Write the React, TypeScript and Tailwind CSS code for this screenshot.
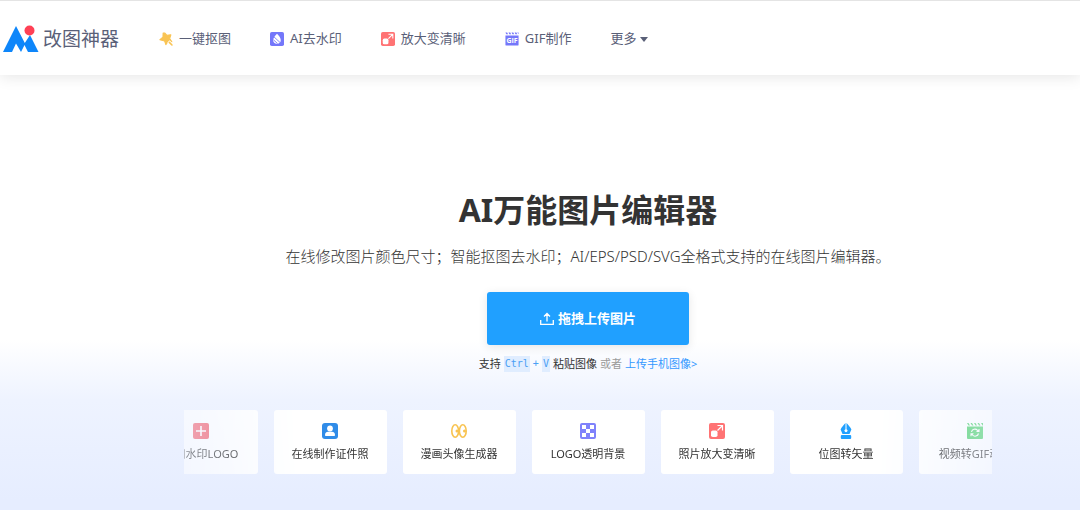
import React from 'react'

const GifIcon = ({ className }: { className: string }) => (
  <svg viewBox="0 0 16 16" className={className} aria-hidden="true">
    <path d="M.5.500h2l1 2h-2zM4 .5h2l1 2H5zM7.500.500h2l1 2h-2zM11 .5h2l1 2h-2zM14 .5h1.500v2zM.5 4h15v10.500a1 1 0 0 1-1 1h-13a1 1 0 0 1-1-1z" fill="#7477fa" />
    <text x="8" y="12.800" textAnchor="middle" fontSize="8" fontWeight="bold" fill="#fff" fontFamily="Open Sans, sans-serif">GIF</text>
  </svg>
)

const StarIcon = ({ className }: { className: string }) => (
  <svg viewBox="0 0 16 16" className={className} aria-hidden="true">
    <path
      d="M6.800 1.300 9 3.800l4.600-.6-1.400 4.300 2.500 3.600-4.500-.1-2.400 3.500-1.400-4.200L1 8.800l3.500-2.900.2-4.800z"
      fill="#f9c454"
      stroke="#f9c454"
      strokeWidth="1.200"
      strokeLinejoin="round"
    />
    <path d="m10.800 10.800 4.500 4.500" stroke="#fff" strokeWidth="3.600" />
    <path d="m11.800 11.800 3 3" stroke="#f9c454" strokeWidth="1.800" strokeLinecap="round" />
  </svg>
)

const DropIcon = ({ className }: { className: string }) => (
  <svg viewBox="0 0 16 16" className={className} aria-hidden="true">
    <rect width="16" height="16" rx="2" fill="#7477fa" />
    <path d="M8 2c2.200 2.500 4.300 4.500 4.300 7.200a4.300 4.300 0 0 1-8.600 0C3.700 6.500 5.800 4.500 8 2z" fill="#fff" />
    <path d="m4.500 5.500 7.500 7M4 9l4.500 4" stroke="#7477fa" strokeWidth="1" />
  </svg>
)

const EnlargeIcon = ({ className }: { className: string }) => (
  <svg viewBox="0 0 16 16" className={className} aria-hidden="true">
    <rect width="16" height="16" rx="2" fill="#ff7374" />
    <rect x="2" y="7.500" width="6.500" height="6.500" rx="1.800" fill="#fff" />
    <path d="M8.500 2.500h5v5M13.500 2.500l-5 5" stroke="#fff" strokeWidth="1.200" fill="none" />
  </svg>
)

const PlusIcon = ({ className }: { className: string }) => (
  <svg viewBox="0 0 16 16" className={className} aria-hidden="true">
    <rect width="16" height="16" rx="2" fill="#f25a68" />
    <path d="M8 3v10M3 8h10" stroke="#fff" strokeWidth="1.600" />
  </svg>
)

const PersonIcon = ({ className }: { className: string }) => (
  <svg viewBox="0 0 16 16" className={className} aria-hidden="true">
    <rect width="16" height="16" rx="3" fill="#308ce8" />
    <circle cx="8" cy="5.500" r="2.900" fill="#fff" />
    <path d="M3 12c0-2.200 1.500-3.200 3-3.200h4c1.500 0 3 1 3 3.200 0 .7-.4 1-1 1H4c-.6 0-1-.3-1-1z" fill="#fff" />
  </svg>
)

const EyesIcon = ({ className }: { className: string }) => (
  <svg viewBox="0 0 16 16" className={className} aria-hidden="true">
    <g fill="none" stroke="#f8c350" strokeWidth="1.600">
      <ellipse cx="4.200" cy="8" rx="3.400" ry="6.300" />
      <ellipse cx="11.800" cy="8" rx="3.400" ry="6.300" />
    </g>
    <circle cx="6" cy="8" r="1.500" fill="#f8c350" />
    <circle cx="13.500" cy="8" r="1.500" fill="#f8c350" />
  </svg>
)

const CheckerIcon = ({ className }: { className: string }) => (
  <svg viewBox="0 0 16 16" className={className} aria-hidden="true">
    <rect width="16" height="16" rx="2" fill="#7f82fb" />
    <path d="M2 2h4v4H2zM10 2h4v4h-4zM6 6h4v4H6zM2 10h4v4H2zM10 10h4v4h-4z" fill="#fff" />
  </svg>
)

const PenIcon = ({ className }: { className: string }) => (
  <svg viewBox="0 0 16 16" className={className} fill="#20a0ff" aria-hidden="true">
    <path d="M7.500 0v6.200a1.500 1.500 0 1 0 1 0V0c1.900 2.200 3.900 4 4.900 6.500L11.500 11h-7L2.600 6.500C3.600 4 5.600 2.200 7.500 0z" />
    <rect x="2.800" y="12" width="10.400" height="4" rx="1" />
  </svg>
)

const VideoIcon = ({ className }: { className: string }) => (
  <svg viewBox="0 0 16 16" className={className} aria-hidden="true">
    <path d="M0 0h1.500L3 2.500H1.500zM3.500 0H5l1.500 2.500H5zM7 0h1.500L10 2.500H8.500zM10.500 0H12l1.500 2.500H12zM14 0h2v2.500h-.5zM0 3.500h16V15a1 1 0 0 1-1 1H1a1 1 0 0 1-1-1z" fill="#43cf63" />
    <path d="M4.500 9a3.500 3.500 0 0 1 6-1.700L12 8.500M12 6v2.500H9.500M11.500 10.500a3.500 3.500 0 0 1-6 1.500L4 10.700M4 13.200v-2.500h2.500" stroke="#fff" strokeWidth="1.100" fill="none" />
  </svg>
)

const navItems = [
  { label: '一键抠图', Icon: StarIcon },
  { label: 'AI去水印', Icon: DropIcon },
  { label: '放大变清晰', Icon: EnlargeIcon },
  { label: 'GIF制作', Icon: GifIcon },
]

const tools = [
  { label: '图加水印LOGO', Icon: PlusIcon },
  { label: '在线制作证件照', Icon: PersonIcon },
  { label: '漫画头像生成器', Icon: EyesIcon },
  { label: 'LOGO透明背景', Icon: CheckerIcon },
  { label: '照片放大变清晰', Icon: EnlargeIcon },
  { label: '位图转矢量', Icon: PenIcon },
  { label: '视频转GIF动图', Icon: VideoIcon },
]

function Header() {
  return (
    <header className="flex h-[75px] items-center border-t border-[#e4e4e4] bg-white pt-[2px] pl-[3px] text-[#5a6078] shadow-[0_2px_14px_rgba(0,0,0,0.1)]">
      <a href="#" className="flex items-center gap-1 text-[19px]">
        <svg viewBox="0 0 36 28" className="h-7 w-9" aria-hidden="true">
          <path d="M0 27 13 1l8.800 17L27 10l8.500 17H25l-3.500-7-3.500 7-5-8.500L9 27z" fill="#0e86fa" />
          <circle cx="26.500" cy="5.500" r="5" fill="#ff4055" />
        </svg>
        改图神器
      </a>
      <nav className="ml-10 flex items-center gap-[39px] text-[13px]">
        {navItems.map(({ label, Icon }) => (
          <a key={label} href="#" className="flex items-center gap-[6px] whitespace-nowrap">
            <Icon className="size-[14px]" />
            {label}
          </a>
        ))}
        <button type="button" className="flex items-center gap-1">
          更多
          <svg viewBox="0 0 8 5" className="h-[5px] w-2" aria-hidden="true">
            <path d="M0 0h8L4 5z" fill="currentColor" />
          </svg>
        </button>
      </nav>
    </header>
  )
}

function App() {
  return (
    <div className="flex min-h-screen flex-col bg-[linear-gradient(to_bottom,#fff_340px,#eef3ff_400px,#e6edff_500px)] font-['Noto_Sans','Noto_Sans_CJK_SC',sans-serif] text-[#333]">
      <Header />
      <main className="flex flex-col items-center pt-[111px] pl-24">
        <h1 className="text-[32px] leading-12 font-bold">AI万能图片编辑器</h1>
        <p className="mt-3 text-[15px] leading-5 font-light">
          在线修改图片颜色尺寸；智能抠图去水印；AI/EPS/PSD/SVG全格式支持的在线图片编辑器。
        </p>
        <button
          type="button"
          className="mt-[26px] flex h-[53px] w-[202px] items-center justify-center gap-1 rounded-[3px] bg-[#20a0ff] text-[13px] font-bold text-white shadow-[0_2px_10px_rgba(0,0,0,0.1)]"
        >
          <svg viewBox="0 0 14 14" className="size-[14px]" fill="none" stroke="#fff" strokeWidth="1.300" aria-hidden="true">
            <path d="M.7 8v4.300h12.600V8M7 9.500V2M4 4.500l3-3 3 3" />
          </svg>
          拖拽上传图片
        </button>
        <p className="mt-[11px] flex items-center gap-[3px] text-[11px] leading-4">
          支持
          <span className="flex items-center gap-[3px] font-['DejaVu_Sans_Mono',monospace] text-[10px] text-[#4aa0f5]">
            <kbd className="bg-[#e0edff] px-[1px] font-[inherit]">Ctrl</kbd>
            +
            <kbd className="bg-[#e0edff] px-[1px] font-[inherit]">V</kbd>
          </span>
          粘贴图像
          <span className="text-[#999]">或者</span>
          <a href="#" className="text-[#3398ff]">上传手机图像&gt;</a>
        </p>
        <div className="mt-[38px] flex w-[808px] justify-center gap-4 overflow-hidden mask-[linear-gradient(to_right,rgba(0,0,0,0.5),#000_120px,#000_688px,rgba(0,0,0,0.5))]">
          {tools.map(({ label, Icon }) => (
            <a
              key={label}
              href="#"
              className="flex h-16 w-[113px] shrink-0 flex-col items-center gap-[7px] rounded-[3px] bg-white pt-[13px] text-[11px] leading-4 whitespace-nowrap"
            >
              <Icon className="size-4" />
              {label}
            </a>
          ))}
        </div>
      </main>
    </div>
  )
}

export default App
